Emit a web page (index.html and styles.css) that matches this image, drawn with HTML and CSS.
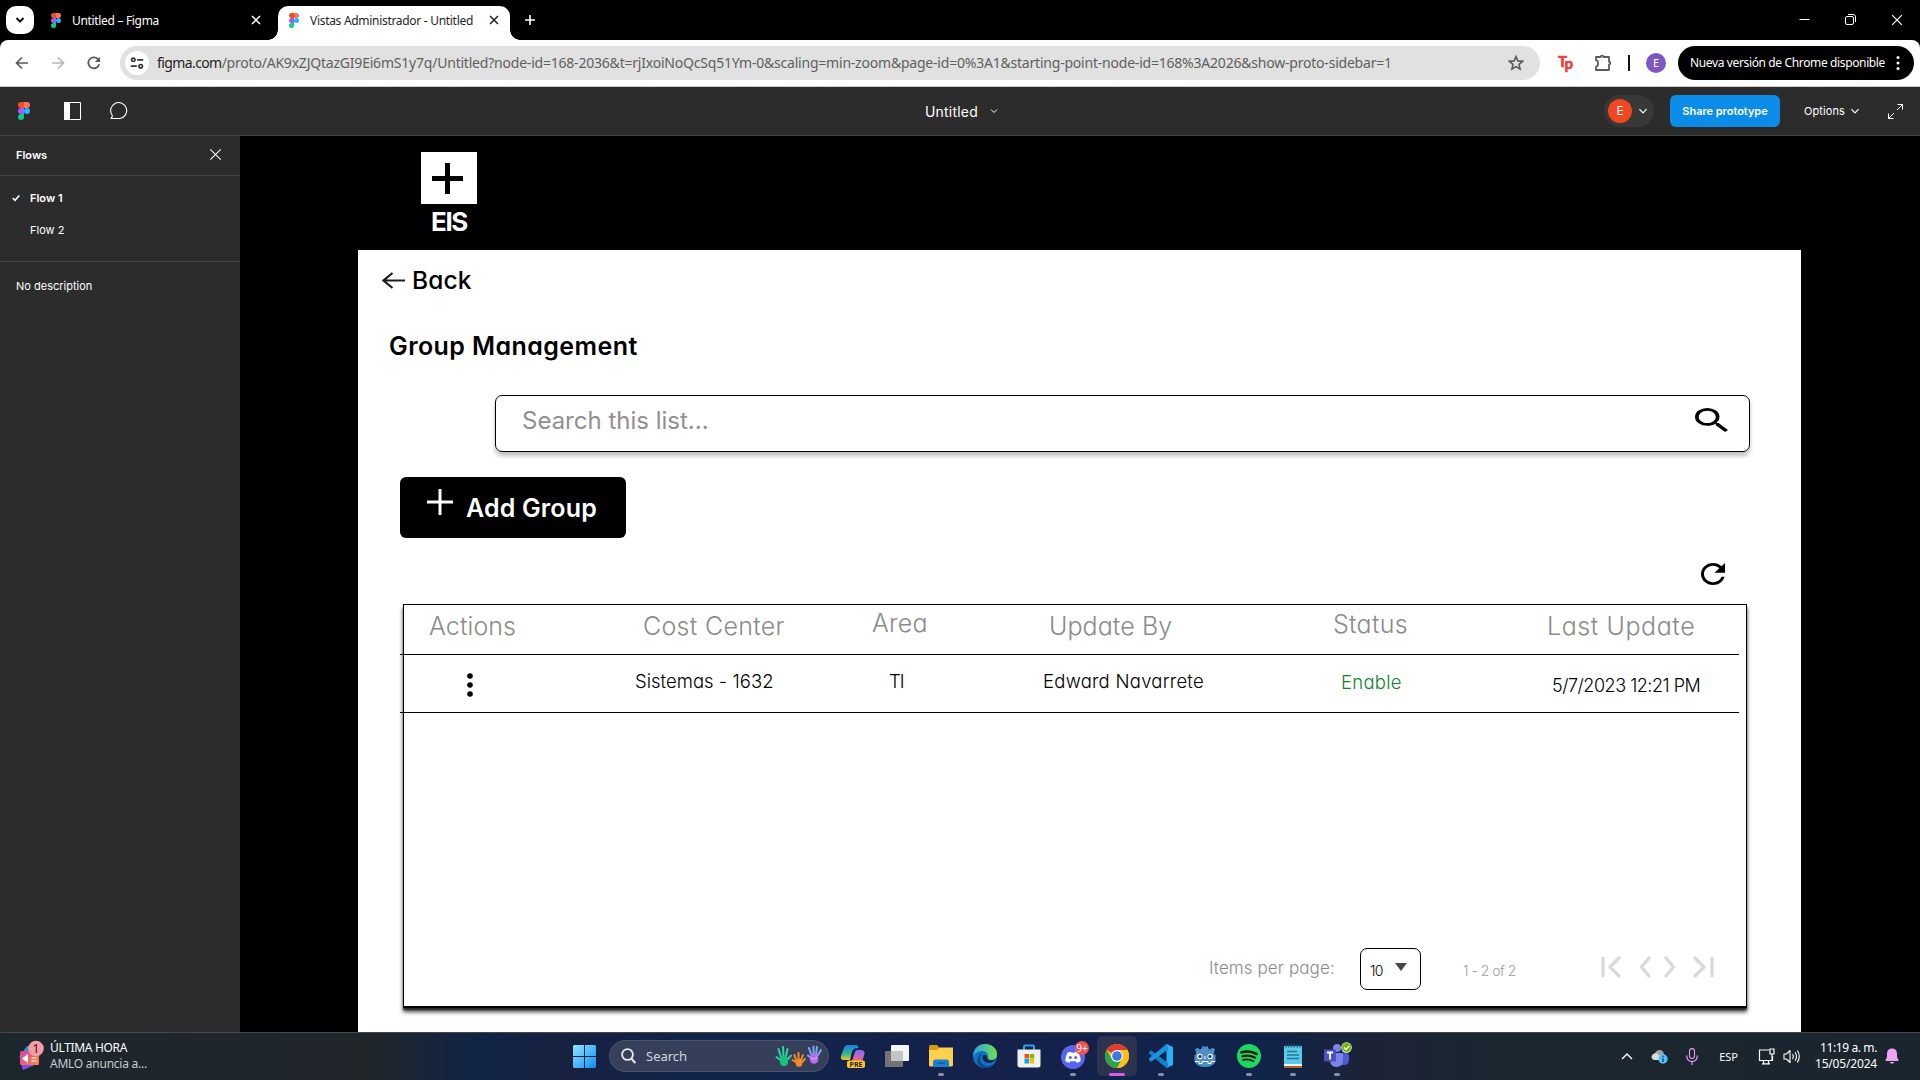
FILE: index.html
```html
<!DOCTYPE html>
<html lang="es">
<head>
<meta charset="utf-8">
<title>Vistas Administrador - Untitled</title>
<link rel="stylesheet" href="styles.css">
</head>
<body>
<svg class="defs" width="0" height="0" aria-hidden="true">
  <symbol id="figma" viewBox="0 0 10 15">
    <path fill="#f24e1e" d="M2.5 0H5v5H2.5a2.5 2.5 0 0 1 0-5z"/>
    <path fill="#ff7262" d="M5 0h2.5a2.5 2.5 0 0 1 0 5H5z"/>
    <path fill="#a259ff" d="M2.5 5H5v5H2.5a2.5 2.5 0 0 1 0-5z"/>
    <circle fill="#1abcfe" cx="7.5" cy="7.5" r="2.5"/>
    <path fill="#0acf83" d="M2.5 10H5v2.5A2.5 2.5 0 1 1 2.5 10z"/>
  </symbol>
  <symbol id="cross" viewBox="0 0 10 10"><path d="M1 1l8 8M9 1l-8 8" fill="none" stroke="currentColor"/></symbol>
  <symbol id="chev" viewBox="0 0 10 10"><path d="M2 3.5l3 3 3-3" fill="none" stroke="currentColor"/></symbol>
</svg>

<header class="tabs">
  <button class="tab-search"><svg width="10" height="10" viewBox="0 0 10 10"><path d="M1.5 3l3.5 3.6L8.500 3" fill="none" stroke="#111" stroke-width="2"/></svg></button>
  <div class="tab">
    <svg class="fav" width="10" height="15"><use href="#figma"/></svg>
    <span class="tab-title t1">Untitled – Figma</span>
    <svg class="tab-close" width="10" height="10" stroke-width="1.5"><use href="#cross"/></svg>
  </div>
  <div class="tab active">
    <svg class="fav" width="10" height="15"><use href="#figma"/></svg>
    <span class="tab-title t2">Vistas Administrador - Untitled</span>
    <svg class="tab-close" width="10" height="10" stroke-width="1.5"><use href="#cross"/></svg>
  </div>
  <svg class="new-tab" width="12" height="12" viewBox="0 0 12 12"><path d="M6 1v10M1 6h10" stroke="#fff" stroke-width="1.6"/></svg>
  <div class="win">
    <svg width="11" height="11" viewBox="0 0 11 11"><path d="M.5 5.500h10" stroke="#fff"/></svg>
    <svg width="11" height="11" viewBox="0 0 11 11"><rect x=".5" y="2.500" width="8" height="8" rx="1.500" fill="none" stroke="#fff"/><path d="M3 .5h5a2.500 2.500 0 0 1 2.500 2.500v5" fill="none" stroke="#fff"/></svg>
    <svg width="12" height="12"><use href="#cross"/></svg>
  </div>
</header>

<div class="toolbar">
  <div class="nav">
    <svg width="14" height="14" viewBox="0 0 14 14"><path d="M13 7H2M7 1.500L1.500 7 7 12.500" fill="none" stroke="#5a5a5a" stroke-width="1.700"/></svg>
    <svg width="14" height="14" viewBox="0 0 14 14"><path d="M1 7h11M7 1.500L12.500 7 7 12.500" fill="none" stroke="#b9b9b9" stroke-width="1.700"/></svg>
    <svg width="14" height="14" viewBox="0 0 14 14"><path d="M12.200 8.300A5.500 5.500 0 1 1 10.900 3.100L12.600 4.800" fill="none" stroke="#5a5a5a" stroke-width="1.700"/><path d="M13 .8v5.200H7.800z" fill="#5a5a5a"/></svg>
  </div>
  <div class="omnibox">
    <span class="site"><svg width="14" height="14" viewBox="0 0 14 14"><g fill="none" stroke="#333" stroke-width="1.700"><circle cx="3.300" cy="3.800" r="1.700"/><path d="M7.200 3.800h6M.8 10.200h6"/><circle cx="10.700" cy="10.200" r="1.700"/></g></svg></span>
    <span class="url"><b>figma.com</b>/proto/AK9xZJQtazGI9Ei6mS1y7q/Untitled?node-id=168-2036&amp;t=rjIxoiNoQcSq51Ym-0&amp;scaling=min-zoom&amp;page-id=0%3A1&amp;starting-point-node-id=168%3A2026&amp;show-proto-sidebar=1</span>
    <svg class="star" width="16" height="16" viewBox="0 0 16 16"><path d="M8 1.600l1.900 4.300 4.700.4-3.600 3.100 1.100 4.600L8 11.600 3.900 14 5 9.400 1.400 6.300l4.700-.4z" fill="none" stroke="#5a5a5a" stroke-width="1.600"/></svg>
  </div>
  <span class="tp">T<i>p</i></span>
  <svg class="puzzle" width="18" height="18" viewBox="0 0 18 18"><path d="M2 3h4.700a1.400 1.400 0 0 1 2.800 0H15v4.700a1.400 1.400 0 0 1 0 2.800V16H2v-3.200c2.800-.6 2.800-6 0-6.600z" fill="none" stroke="#5a5a5a" stroke-width="1.800" stroke-linejoin="round"/></svg>
  <i class="sep"></i>
  <span class="me">E</span>
  <div class="update"><span>Nueva versión de Chrome disponible</span><svg width="4" height="16" viewBox="0 0 4 16"><g fill="#fff"><circle cx="2" cy="2.500" r="1.500"/><circle cx="2" cy="8" r="1.500"/><circle cx="2" cy="13.500" r="1.500"/></g></svg></div>
</div>

<div class="figbar">
  <svg class="logo" width="12" height="18"><use href="#figma"/></svg>
  <svg class="panel" width="17" height="18" viewBox="0 0 17 18"><path d="M.5.5h16v17H.5z" fill="none" stroke="#fff"/><path d="M0 0h6v18H0z" fill="#fff"/></svg>
  <svg class="comment" width="19" height="18" viewBox="0 0 19 18"><path d="M1 16.500c1-.9 1.500-1.900 1.200-3.200A8 8 0 1 1 9.800 16.500z" fill="none" stroke="#fff" stroke-width="1.100" stroke-linejoin="round"/></svg>
  <div class="file"><span>Untitled</span><svg width="10" height="10"><use href="#chev"/></svg></div>
  <div class="user"><span>E</span><svg width="12" height="12"><use href="#chev"/></svg></div>
  <button class="share">Share prototype</button>
  <div class="options"><span>Options</span><svg width="12" height="12"><use href="#chev"/></svg></div>
  <svg class="expand" width="15" height="15" viewBox="0 0 15 15"><path d="M9.500.5h5v5M14.500.5L9 6M.5 9.500v5h5M.5 14.500L6 9" fill="none" stroke="#fff"/></svg>
</div>

<div class="main">
  <aside class="side">
    <div class="side-head"><span>Flows</span><svg width="13" height="13" stroke-width=".8"><use href="#cross"/></svg></div>
    <div class="flows">
      <div class="flow on"><svg width="8" height="8" viewBox="0 0 9 9"><path d="M.8 4.500l2.600 2.600L8.200 1.600" fill="none" stroke="#fff" stroke-width="1.800"/></svg>Flow 1</div>
      <div class="flow">Flow 2</div>
    </div>
    <p class="desc">No description</p>
  </aside>

  <section class="stage">
    <div class="brand">
      <div class="brand-box"><svg width="31" height="31" viewBox="0 0 31 31"><path d="M15.500 0v31M0 15.500h31" stroke="#000" stroke-width="5"/></svg></div>
      <div class="brand-name">EIS</div>
    </div>
    <div class="sheet">
      <div class="back"><svg width="23" height="17" viewBox="0 0 23 17"><path d="M23 8.500H1.500M10.500 1L1.500 8.500l9 7.500" fill="none" stroke="#1d1b20" stroke-width="2.200"/></svg><span>Back</span></div>
      <h1>Group Management</h1>
      <div class="search"><span>Search this list...</span><svg width="33" height="24" viewBox="3 3 17.490 17.490" preserveAspectRatio="none"><path d="M15.500 14h-.79l-.28-.27A6.471 6.471 0 0 0 16 9.500 6.500 6.500 0 1 0 9.500 16c1.610 0 3.090-.59 4.230-1.570l.27.28v.79l5 4.990L20.490 19l-4.990-5zm-6 0C7.010 14 5 11.990 5 9.500S7.010 5 9.500 5 14 7.010 14 9.500 11.990 14 9.500 14z"/></svg></div>
      <button class="add"><svg width="26" height="26" viewBox="0 0 26 26"><path d="M13 0v26M0 13h26" stroke="#fff" stroke-width="3"/></svg><span>Add Group</span></button>
      <svg class="refresh" width="24" height="22" viewBox="4 4 16 16" preserveAspectRatio="none"><path d="M17.650 6.350C16.200 4.900 14.210 4 12 4c-4.420 0-7.990 3.580-7.990 8s3.570 8 7.990 8c3.730 0 6.840-2.550 7.730-6h-2.080c-.82 2.330-3.040 4-5.650 4-3.310 0-6-2.690-6-6s2.690-6 6-6c1.660 0 3.140.69 4.220 1.780L13 11h7V4l-2.350 2.350z"/></svg>
      <div class="table">
        <div class="row head">
          <span class="h1c">Actions</span><span class="h2c">Cost Center</span><span class="h3c">Area</span><span class="h4c">Update By</span><span class="h5c">Status</span><span class="h6c">Last Update</span>
        </div>
        <div class="row item">
          <svg class="dots" width="6" height="24" viewBox="0 0 6 24"><circle cx="3" cy="3" r="2.800"/><circle cx="3" cy="12" r="2.800"/><circle cx="3" cy="21" r="2.800"/></svg>
          <span class="c2">Sistemas - 1632</span><span class="c3">TI</span><span class="c4">Edward Navarrete</span><span class="c5">Enable</span><span class="c6">5/7/2023 12:21 PM</span>
        </div>
        <div class="pager">
          <span class="ipp">Items per page:</span>
          <div class="select"><span>10</span><svg width="12" height="8" viewBox="0 0 12 8"><path d="M0 0h12L6 8z" fill="#49454f"/></svg></div>
          <span class="range">1 - 2 of 2</span>
          <svg class="arrows" width="113" height="22" viewBox="0 0 113 22"><g fill="none" stroke="#d9d9d9" stroke-width="3.200" stroke-linecap="round" stroke-linejoin="round"><path d="M2 2v18M18 2L9 11l9 9M48 2l-7.500 9 7.500 9M65 2l7.500 9-7.500 9M94 2l9 9-9 9M111 2v18"/></g></svg>
        </div>
      </div>
    </div>
  </section>
</div>

<footer class="taskbar">
  <div class="news">
    <svg width="28" height="31" viewBox="0 0 28 31">
      <defs><linearGradient id="nw" x1="0" x2="1" y1="0" y2="1"><stop offset="0" stop-color="#d63fb0"/><stop offset="1" stop-color="#ff8a3c"/></linearGradient></defs>
      <path d="M1 17l8-11 10 2-4 12z" fill="#2196d8"/><path d="M3 24l14 1-12 5z" fill="#7a4df0"/><rect x="2" y="11" width="19" height="14" rx="1.500" fill="url(#nw)"/><path d="M4 18.500l6-4.500v9z" fill="#fff"/><path d="M13.500 18h5M13.500 21h5" stroke="#ffe0c8" stroke-width="1.500"/>
      <circle cx="18" cy="8.500" r="7.800" fill="#fc9aa4"/><text x="18" y="13" text-anchor="middle" class="badge-n">1</text>
    </svg>
    <div class="news-text"><b>ÚLTIMA HORA</b><span>AMLO anuncia a...</span></div>
  </div>
  <div class="apps">
    <svg class="start" width="23" height="23" viewBox="0 0 23 23"><defs><linearGradient id="st" x2="1" y2="1"><stop offset="0" stop-color="#8fe6ff"/><stop offset="1" stop-color="#0f8cf5"/></linearGradient></defs><path fill="url(#st)" d="M1 0h10v11H0V1zM12 0h10l1 1v10H12zM0 12h11v11H1l-1-1zM12 12h11v10l-1 1H12z"/></svg>
    <div class="tb-search">
      <svg width="15" height="16" viewBox="0 0 15 16"><circle cx="6.500" cy="6.500" r="5.400" fill="none" stroke="#e8eaf0" stroke-width="1.800"/><path d="M10.300 10.500l4 4.500" stroke="#e8eaf0" stroke-width="2"/></svg>
      <span>Search</span>
      <svg class="hands" width="47" height="23" viewBox="0 0 47 23">
        <g stroke-linecap="round" fill="none" stroke-width="2">
          <g stroke="#2fd3a0"><path d="M6 12L3.500 4M8.500 11L8 2M11 11l1.500-7M5.500 15l-4-3M13 14l3-3.500"/><path d="M9 15v2" stroke-width="8" stroke="#14c47c"/></g>
          <g stroke="#f58a2a"><path d="M21 15l-1.500-5M23.500 14V8M26 15l2-5M20.500 17l-3-2M27 17l3-3"/><path d="M24 17v1.500" stroke-width="6.500"/></g>
          <g stroke="#7ea6f2"><path d="M36 9l-2-6M38.500 9V1.500M41 9l1-7M43 10l3-5M36 13l-3-2.500"/><path d="M39 12.500v2" stroke-width="8.500" stroke="#b46cf0"/><path d="M36 13.500q3 2 6-1" stroke="#e8b8ff" stroke-width="1"/></g>
        </g>
      </svg>
    </div>
    <div class="app"><svg width="26" height="26" viewBox="0 0 26 26"><defs><linearGradient id="c1" y2="1" x2="0"><stop offset="0" stop-color="#1b7fe8"/><stop offset=".6" stop-color="#37b88a"/><stop offset="1" stop-color="#f4c51c"/></linearGradient><linearGradient id="c2" y2="1" x2="0"><stop offset="0" stop-color="#8a6cf5"/><stop offset="1" stop-color="#f2628a"/></linearGradient></defs><path d="M8 2h8q2 0 2.500 3l-4 .5q-2 1-3 5L10 17H3q-3-1-2-4L4 5q1-3 4-3z" fill="url(#c1)"/><path d="M17 7h5q3 1 2.500 4L22 19h-9q-2 0 0-4l2-6q.6-2 2-2z" fill="url(#c2)"/><rect x="7" y="17.500" width="18" height="7.500" rx="2" fill="#ffc81a"/><text x="16" y="23.800" text-anchor="middle" class="pre">PRE</text></svg></div>
    <div class="app"><svg width="26" height="26" viewBox="0 0 26 26"><rect x="1" y="8" width="18" height="16" rx="1" fill="#747474"/><rect x="7" y="2" width="18" height="16" rx="1" fill="#f4f4f4"/><path d="M7 8h12v10H7z" fill="#c4c4c4"/></svg></div>
    <div class="app run"><svg width="26" height="26" viewBox="0 0 26 26"><path d="M1 3.500Q1 2 2.500 2H9l2.500 3-2 3H1z" fill="#d99a12"/><path d="M1 7h8l2.500-2.500H25V22q0 1.500-1.500 1.500h-21Q1 23.500 1 22z" fill="#fdd04c"/><path d="M5 24v-5q0-2.500 2.500-2.500h11Q21 16.500 21 19v5z" fill="#1a7fd0"/><path d="M9 19.500h8V21H9z" fill="#0c5da8"/></svg></div>
    <div class="app"><svg width="26" height="26" viewBox="0 0 26 26"><defs><linearGradient id="e1"><stop offset="0" stop-color="#2aa6e8"/><stop offset="1" stop-color="#6fe04c"/></linearGradient></defs><circle cx="13" cy="13" r="12" fill="#1272c4"/><path d="M1.500 10C3 4 8 1 13 1c7 0 12 4.500 12 10 0 4-3 6-6 6-2.500 0-4-1-3.500-2.500C17 12 15 8 10.500 8 6 8 2.500 10 1 14q0-2 .5-4z" fill="url(#e1)"/><path d="M11 9.500C7 12 7 19 12 22q4 2 9.500-.5C18 25 13 25.500 10 24.500 3 22 4 12 11 9.500z" fill="#0b4a8c"/><path d="M11.500 12q2-1 4 2c-.5 2 1 3.200 3.500 3.200q2.500 0 4.500-1.200-2 4-6 4-6 0-7-5-.2-2 1-3z" fill="#13294a"/></svg></div>
    <div class="app"><svg width="26" height="26" viewBox="0 0 26 26"><path d="M8 7V3.500Q8 2.500 9 2.500h8q1 0 1 1V7" fill="none" stroke="#21a8ee" stroke-width="2"/><path d="M1.500 6.500h23V22q0 2.500-2.500 2.500H4Q1.500 24.500 1.500 22z" fill="#f0f0f0"/><path d="M8.500 11H13v4.500H8.500z" fill="#f25022"/><path d="M13.700 11h4.500v4.500h-4.500z" fill="#7fba00"/><path d="M8.500 16H13v4.500H8.500z" fill="#00a4ef"/><path d="M13.700 16h4.500v4.500h-4.500z" fill="#ffb900"/></svg></div>
    <div class="app run"><svg class="discord" width="32" height="32" viewBox="-3 -5 32 32"><circle cx="13" cy="13" r="12" fill="#5865f2"/><path d="M7.500 8.800Q9.500 7.700 11 7.700l.5 1h3l.5-1q1.500 0 3.500 1.100 2.300 4 2.200 8.200-2 1.600-4 1.800l-.9-1.600h-5.600l-.9 1.600q-2-.2-4-1.800Q5.200 12.800 7.500 8.800z" fill="#fff"/><circle cx="10.300" cy="13.500" r="1.600" fill="#5865f2"/><circle cx="15.700" cy="13.500" r="1.600" fill="#5865f2"/><circle cx="22" cy="4" r="7" fill="#f05050"/><text x="22" y="7.500" text-anchor="middle" class="nine">9+</text></svg></div>
    <div class="app run focus"><svg width="26" height="26" viewBox="0 0 26 26"><circle cx="13" cy="13" r="12" fill="#fbc116"/><path d="M13 13L2.610 7A12 12 0 0 1 23.390 7z" fill="#e33b2e"/><path d="M2.610 7A12 12 0 0 0 13 25l5.200-9L13 13 7.800 16z" fill="#2ba24c"/><path d="M13 7h10.390A12 12 0 0 1 13 25l5.200-9z" fill="#fbc116"/><circle cx="13" cy="13" r="6" fill="#fff"/><circle cx="13" cy="13" r="4.800" fill="#3b78e7"/></svg></div>
    <div class="app run"><svg width="26" height="26" viewBox="0 0 26 26"><path d="M18.500 1L25 4v18l-6.500 3z" fill="#2bb0f5"/><path d="M1 9l2-1.800L20 20v5h-1.500L1 10.500z" fill="#1380cc"/><path d="M1 17l2 1.800L20 6.500V1h-1.500L1 15.500z" fill="#1c93dc"/></svg></div>
    <div class="app"><svg width="26" height="26" viewBox="0 0 26 26"><path d="M10.500 3l2.500.8L15.500 3l1 2.800 2 .8 2-2 2.500 2-1 2.600V12l1.500-.5V19q-3 5-10.500 5T2.500 19v-7.500L4 12V9.200L3 6.600l2.500-2 2 2 2-.8z" fill="#4a8fc8"/><circle cx="7.800" cy="13.500" r="2.700" fill="#fff"/><circle cx="18.200" cy="13.500" r="2.700" fill="#fff"/><circle cx="8" cy="13.500" r="1.700" fill="#414042"/><circle cx="18" cy="13.500" r="1.700" fill="#414042"/><path d="M13 13v3M3 18.500h4v2h3v-2h6v2h3v-2h4" stroke="#fff" fill="none" stroke-width="1"/></svg></div>
    <div class="app run"><svg width="26" height="26" viewBox="0 0 26 26"><circle cx="13" cy="13" r="12" fill="#1ed760"/><g fill="none" stroke="#101a14" stroke-linecap="round"><path d="M5.500 9.300q8-2.300 15 1.500" stroke-width="2.600"/><path d="M6.500 13.300q6.500-2 12.500 1.400" stroke-width="2.200"/><path d="M7 17q5.500-1.600 10.500 1.300" stroke-width="1.800"/></g></svg></div>
    <div class="app run"><svg width="26" height="26" viewBox="0 0 26 26"><path d="M4 22h18v3H4z" fill="#b45f1c"/><path d="M4 3h18v20H4z" fill="#5cc9e6"/><path d="M4 21h18v2H4z" fill="#e8f6fa"/><path d="M6 1.500v3M8.800 1.500v3M11.600 1.500v3M14.400 1.500v3M17.200 1.500v3M20 1.500v3" stroke="#17607e" stroke-width="1.300"/><path d="M7 8.500h10M7 12h12M7 15.500h12" stroke="#1d7a9c" stroke-width="1.500"/></svg></div>
    <div class="app run"><svg width="30" height="28" viewBox="0 0 30 28"><circle cx="15" cy="6" r="4" fill="#7b83eb"/><circle cx="23.500" cy="9" r="3" fill="#5059c9"/><path d="M17 12h10v6q0 5-5 5h-3z" fill="#5059c9"/><path d="M8 11h13v7q0 7-6.500 7T8 18z" fill="#7b83eb"/><rect x="2" y="7.500" width="12" height="12" rx="1" fill="#4b53bc"/><path d="M5 10.500h6M8 10.500v7" stroke="#fff" stroke-width="1.800"/><circle cx="24.500" cy="5.500" r="5.200" fill="#f4ffe8"/><circle cx="24.500" cy="5.500" r="4.500" fill="#6bb700"/><path d="M22 5.500l2 2 3.200-3.500" fill="none" stroke="#fff" stroke-width="1.300"/></svg></div>
  </div>
  <div class="tray">
    <svg width="12" height="8" viewBox="0 0 12 8"><path d="M1 7l5-5 5 5" fill="none" stroke="#fff" stroke-width="1.400"/></svg>
    <svg class="cloud" width="17" height="15" viewBox="0 0 17 15"><path d="M4 11q-3.500 0-3.500-3T4 4.500Q5 1 8.500 1T13 5v6z" fill="#a6a6a6"/><path d="M2 5.500Q5 3 8 6l3 5H4Q1 10.500.6 8z" fill="#dcdcdc"/><circle cx="12" cy="10" r="4.700" fill="#4cc2ff"/><path d="M12 9.200V13M12 6.800v1.400" stroke="#14405a" stroke-width="1.400"/></svg>
    <svg class="mic" width="12" height="17" viewBox="0 0 12 17"><rect x="3.500" y=".6" width="5" height="10" rx="2.500" fill="none" stroke="#e89af0" stroke-width="1.100"/><path d="M.8 7.500v1a5.200 5.200 0 0 0 10.400 0v-1M6 13.600V17" fill="none" stroke="#e89af0" stroke-width="1.200"/></svg>
    <span class="lang">ESP</span>
    <svg class="net" width="17" height="17" viewBox="0 0 17 17"><path d="M11 2H1.500v10.500h13V8M4 15.800h8M5.500 12.500v3M10.500 12.500v3M14 6v6" fill="none" stroke="#fff" stroke-width="1.200"/><path d="M12 1h4v5h-4z" fill="none" stroke="#fff" stroke-width="1.200"/></svg>
    <svg class="vol" width="17" height="15" viewBox="0 0 17 15"><path d="M1 5h2.500L7 1.500v12L3.500 10H1zM9.500 5q1.500 2.500 0 5M12 3.200q3 4.300 0 8.600M14.300 1.500q4 6 0 12" fill="none" stroke="#fff" stroke-width="1.100" stroke-linejoin="round"/></svg>
    <div class="clock"><span class="k1">11:19 a. m.</span><span class="k2">15/05/2024</span></div>
    <svg class="bell" width="14" height="16" viewBox="0 0 14 16"><path d="M7 .5Q12 .5 12 6v3l1.500 3v1H.5v-1L2 9V6Q2 .5 7 .5zM4.700 14h4.600Q8.500 15.800 7 15.800T4.700 14z" fill="#eda4f2"/></svg>
  </div>
</footer>
</body>
</html>
```
FILE: styles.css
```css
* { box-sizing: border-box; }
body {
  margin: 0;
  width: 1920px;
  height: 1080px;
  overflow: hidden;
  display: flex;
  flex-direction: column;
  background: #000;
  font-family: Inter, "Liberation Sans", sans-serif;
  color: #fff;
  white-space: nowrap;
}
svg { display: block; flex: none; }
.defs { position: absolute; }
button { border: 0; padding: 0; font: inherit; color: inherit; }

/* Browser tabs */
.tabs, .toolbar, .taskbar { font-family: "Noto Sans", "Open Sans", sans-serif; }
.tabs { height: 40px; display: flex; align-items: center; padding-left: 6px; background: #000; }
.tab-search { width: 28px; height: 28px; border-radius: 10px; background: #fff; display: flex; align-items: center; justify-content: center; }
.tab { width: 244px; height: 34px; margin-top: 6px; display: flex; align-items: center; padding: 0 17px 6px; font-size: 12px; }
.tab .fav { margin-right: 11px; }
.tab-title { flex: 1; }
.t1 { letter-spacing: -.32px; }
.t2 { letter-spacing: -.3px; }
.tab.active {
  position: relative;
  width: 232px;
  padding: 0 11px 6px;
  background: #fff;
  color: #1f1f1f;
  border-radius: 10px 10px 0 0;
}
.tab.active::before, .tab.active::after {
  content: "";
  position: absolute;
  bottom: 0;
  width: 10px;
  height: 10px;
  background: radial-gradient(circle at 0 0, transparent 9.5px, #fff 10px);
}
.tab.active::before { left: -10px; }
.tab.active::after { right: -10px; background: radial-gradient(circle at 100% 0, transparent 9.5px, #fff 10px); }
.new-tab { margin-left: 14px; }
.win { margin-left: auto; display: flex; gap: 35px; padding-right: 17px; }

/* Toolbar */
.toolbar { height: 47px; display: flex; align-items: center; background: #fff; border-bottom: 1px solid #c9c9c9; border-radius: 8px 8px 0 0; color: #1f1f1f; }
.nav { width: 120px; display: flex; gap: 22px; padding-left: 15px; }
.omnibox { width: 1420px; height: 34px; border-radius: 17px; background: #e1e1e1; display: flex; align-items: center; padding-left: 5px; }
.site { width: 24px; height: 24px; border-radius: 12px; background: #fff; display: flex; align-items: center; justify-content: center; }
.url { margin: -1px 0 0 8px; font-size: 14px; letter-spacing: -.212px; color: #5f5f5f; }
.url b { font-weight: 400; color: #1f1f1f; letter-spacing: -.6px; }
.star { margin: 0 16px 0 auto; }
.tp { width: 16px; margin: -4px 0 0 18px; font: 900 15px/20px Lato, sans-serif; color: #ef3d3d; letter-spacing: -1px; -webkit-text-stroke: .5px #ef3d3d; }
.tp i { font-style: normal; position: relative; top: 2px; }
.puzzle { margin-left: 20px; }
.sep { width: 2px; height: 16px; background: #111; margin-left: 16px; }
.me { width: 20px; height: 20px; border-radius: 50%; margin-left: 16px; background: #7e57c2; color: #fff; font-size: 11px; line-height: 20px; text-align: center; }
.update { width: 236px; height: 34px; margin-left: 12px; border-radius: 17px; background: #000; color: #fff; font-size: 12px; letter-spacing: -.366px; display: flex; align-items: center; justify-content: space-between; padding: 0 14px 0 12px; }
.update span { margin-top: -1px; }

/* Prototype viewer bar */
.figbar { height: 49px; display: flex; align-items: center; background: #2c2c2c; border-bottom: 1px solid #444; padding-left: 18px; font-size: 11px; }
.panel { margin-left: 34px; }
.comment { margin-left: 29px; }
.file { margin-left: 796px; width: 679px; display: flex; align-items: center; gap: 11px; font-size: 14px; letter-spacing: .2px; }
.user { width: 50px; height: 32px; border-radius: 16px; background: #383838; display: flex; align-items: center; gap: 5px; padding-left: 4px; }
.user span { width: 24px; height: 24px; border-radius: 50%; background: #f24822; text-align: center; font-size: 12px; line-height: 23px; }
.share { width: 110px; height: 32px; margin-left: 16px; border-radius: 6px; background: #0c8ce9; font-size: 11px; font-weight: 600; letter-spacing: -.03px; }
.options { width: 84px; margin-left: 24px; display: flex; align-items: center; gap: 4px; letter-spacing: .1px; }

/* Flows panel */
.main { height: 896px; display: flex; }
.side { width: 240px; background: #2c2c2c; font-size: 11px; }
.side-head { height: 40px; display: flex; align-items: center; justify-content: space-between; padding: 0 18px 2px 16px; border-bottom: 1px solid #444; font-weight: 600; }
.flows { height: 86px; padding-top: 6px; border-bottom: 1px solid #444; }
.flow { height: 32px; display: flex; align-items: center; padding-left: 30px; }
.flow.on { padding-left: 12px; gap: 10px; font-weight: 600; }
.desc { margin: 17px 16px; line-height: 14px; }

/* Prototype */
.stage { flex: 1; padding-left: 118px; background: #000; font-feature-settings: "cv11"; }
.brand { width: 56px; height: 114px; margin-left: 63px; padding-top: 16px; text-align: center; }
.brand-box { height: 52px; background: #fff; display: flex; align-items: center; justify-content: center; padding: 1px 3px 0 0; }
.brand-name { font-size: 26px; line-height: 36px; font-weight: 700; letter-spacing: -1.4px; }
.sheet { width: 1443px; height: 782px; background: #fff; color: #000; display: flex; flex-direction: column; align-items: flex-start; }
.back { margin: 15px 0 0 24px; height: 31px; display: flex; align-items: center; gap: 7px; font-size: 24.500px; font-weight: 500; letter-spacing: .15px; }
.back span { margin-top: -1px; }
h1 { margin: 34px 0 0 31px; font-size: 25px; line-height: 32px; font-weight: 600; letter-spacing: .42px; }
.search { width: 1255px; height: 57px; margin: 33px 0 0 137px; border: 1px solid #000; border-radius: 7px; box-shadow: 0 4px 4px rgba(0, 0, 0, .25); display: flex; justify-content: space-between; padding: 10px 21px 0 26px; font-size: 24px; line-height: 29px; color: #938f8f; font-feature-settings: normal; }
.search svg { margin-top: 2px; }
.add { width: 226px; height: 61px; margin: 25px 0 0 42px; border-radius: 6px; background: #000; color: #fff; display: flex; padding-left: 26px; font-size: 25px; font-weight: 600; letter-spacing: .15px; }
.add svg { margin: 12px 13px 0 1px; }
.add span { line-height: 62px; }
.refresh { margin: 25px 0 0 1343px; }

.table { width: 1344px; height: 404px; margin: 19px 0 0 45px; border: 1px solid #000; border-width: 1px 1px 2px; box-shadow: 0 4px 4px rgba(0, 0, 0, .75), 0 2px 1px rgba(0, 0, 0, .4); display: flex; flex-direction: column; }
.row { width: 1339px; margin-left: -4px; padding-left: 4px; display: flex; border-bottom: 1px solid #000; font-weight: 300; }
.head { height: 50px; padding-left: 29px; font-size: 25px; line-height: 42px; color: #8b8b8b; }
.h1c { width: 214px; letter-spacing: .1px; }
.h2c { width: 229px; letter-spacing: .3px; }
.h3c { width: 177px; letter-spacing: .2px; margin-top: -3px; }
.h4c { width: 284px; letter-spacing: .08px; }
.h5c { width: 214px; letter-spacing: .27px; margin-top: -2px; }
.h6c { letter-spacing: .58px; }
.item { height: 58px; font-size: 18.500px; line-height: 53px; }
.dots { margin: 18px 162px 0 63px; }
.c2 { width: 254px; letter-spacing: .02px; }
.c3 { width: 154px; letter-spacing: -1px; }
.c4 { width: 298px; letter-spacing: .25px; }
.c5 { width: 211px; letter-spacing: .25px; color: #14812f; line-height: 55px; }
.c6 { font-size: 18px; letter-spacing: -.48px; line-height: 61px; }
.pager { margin: auto 0 16px 805px; display: flex; align-items: center; font-weight: 300; color: #8b8b8b; }
.ipp { width: 151px; margin-top: -2px; font-size: 17px; letter-spacing: .1px; }
.select { width: 61px; height: 42px; border: 1px solid #000; border-radius: 7px; display: flex; align-items: center; padding-left: 9px; color: #000; font-size: 14px; letter-spacing: -.7px; }
.select span { width: 25px; margin-top: 2px; font-weight: 300; }
.select svg { margin-top: -4px; }
.range { width: 138px; margin: 3px 0 0 42px; font-size: 14px; letter-spacing: -.5px; color: #9d9d9d; }
.arrows { margin-top: -5px; }

/* Taskbar */
.taskbar { height: 48px; display: flex; align-items: center; border-top: 1px solid #47494d; background: linear-gradient(90deg, #1c272d 0, #20252a 370px, #112447 480px, #17213f 560px, #11244c 720px, #15214a 1000px, #10234b 1260px, #1c2337 1370px, #1b2630 1500px, #1a252d 1920px); }
.news { width: 573px; display: flex; padding: 0 0 2px 18px; gap: 4px; }
.badge-n { font-size: 12px; fill: #222; }
.news-text { display: flex; flex-direction: column; font-size: 12px; line-height: 16px; letter-spacing: -.25px; color: #c8ccd0; }
.news-text b { font-weight: 400; color: #fff; letter-spacing: -.33px; }
.apps { display: flex; align-items: center; height: 46px; padding-bottom: 1px; }
.tb-search { width: 220px; height: 32px; margin: 0 2px 0 13px; border: 1px solid #4a5470; border-radius: 16px; background: #353f5a; display: flex; align-items: center; padding-left: 11px; font-size: 13px; color: #d3d6de; }
.tb-search span { width: 129px; margin: -1px 0 0 10px; }
.app { position: relative; width: 44px; height: 40px; display: flex; align-items: center; justify-content: center; }
.run::after { content: ""; position: absolute; left: 19px; bottom: 0; width: 6px; height: 3px; border-radius: 2px; background: #8b90a2; }
.discord { margin-top: -2px; }
.focus { border-left: 2px solid transparent; border-right: 2px solid transparent; background: #2b3350 padding-box; border-radius: 6px; }
.focus::after { left: 12px; width: 16px; background: #d65fe0; }
.pre { font: 700 7px "Noto Sans", sans-serif; fill: #222; }
.nine { font-size: 10px; fill: #fff; }
.tray { margin-left: auto; padding: 0 21px 1px 0; display: flex; align-items: center; }
.cloud { margin-left: 18px; }
.mic { margin-left: 18px; }
.lang { margin-left: 21px; font-size: 11px; }
.net { margin-left: 20px; }
.vol { margin-left: 8px; }
.clock { width: 77px; display: flex; flex-direction: column; align-items: flex-end; font-size: 12px; line-height: 16px; }
.k1 { letter-spacing: -.39px; }
.k2 { letter-spacing: -.18px; }
.bell { margin-left: 8px; }
```
